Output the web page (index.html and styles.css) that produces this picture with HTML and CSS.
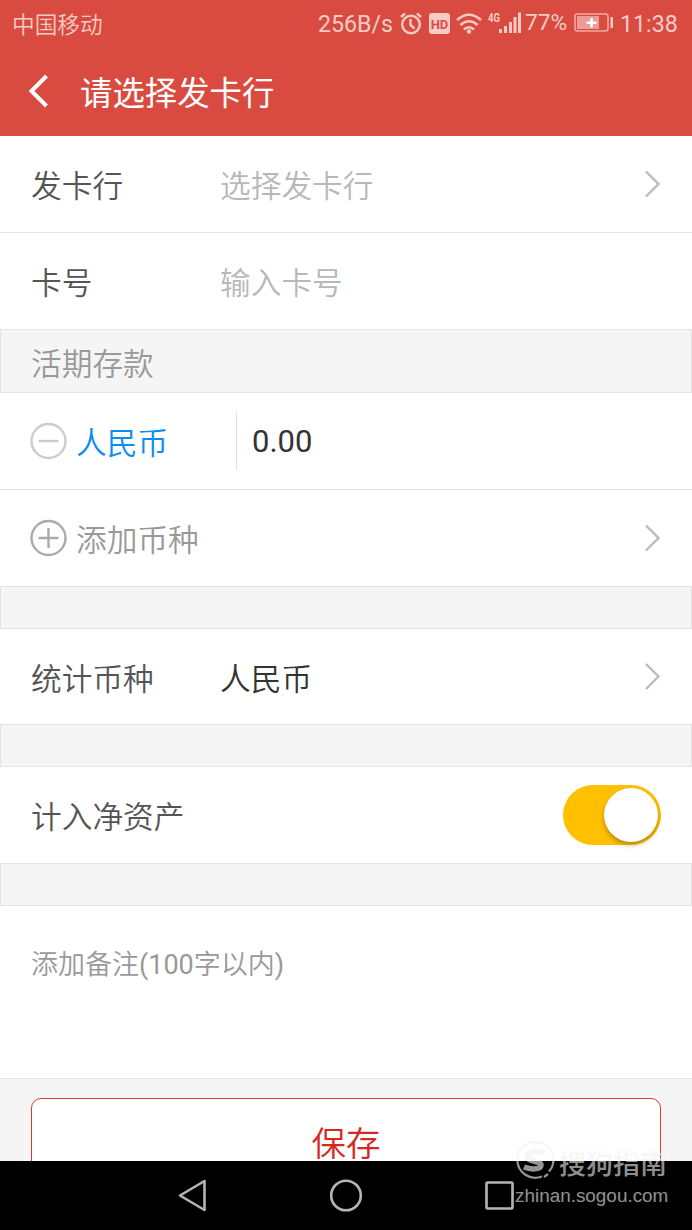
FILE: index.html
```html
<!DOCTYPE html>
<html lang="zh-CN">
<head>
    <meta charset="UTF-8">
    <meta name="viewport" content="width=device-width, initial-scale=1.0">
    <title>请选择发卡行</title>
    <link rel="stylesheet" href="styles.css">
</head>
<body>
    <div class="screen">
        <header class="header">
            <div class="status">
                <span class="carrier">中国移动</span>
                <span class="speed">256B/s</span>
                <svg class="status-icons" width="124" height="30" viewBox="0 0 124 30">
                    <!-- alarm -->
                    <g fill="none" stroke="#f6cbc5" stroke-width="2.400">
                        <circle cx="13" cy="15.500" r="8.800"/>
                        <path d="M12.500 10v6l4 3.500M3 8L7 4.500M19 4.500L23 8"/>
                    </g>
                    <!-- hd -->
                    <rect x="31" y="4" width="21" height="21" rx="3" fill="#f6cbc5"/>
                    <text class="hd" x="41.500" y="19.500" text-anchor="middle">HD</text>
                    <!-- wifi -->
                    <g fill="none" stroke="#f6cbc5" stroke-width="2.600">
                        <path d="M59 11Q71 0.500 83 11M62.500 16Q71 8.500 79.500 16M66 20.500Q71 16 76 20.500"/>
                    </g>
                    <circle cx="71" cy="22.500" r="2.200" fill="#f6cbc5"/>
                    <!-- signal -->
                    <text class="net" x="90" y="13" textLength="12" lengthAdjust="spacingAndGlyphs">4G</text>
                    <path fill="#f6cbc5" d="M101 20h3v4h-3zM106 17h3v7h-3zM111 13h3v11h-3zM115.500 8h3v16h-3zM120 3.500h3v20.500h-3z"/>
                </svg>
                <span class="percent">77%</span>
                <svg class="battery" width="40" height="20" viewBox="0 0 40 20">
                    <rect x="1" y="1" width="33" height="17" rx="2.500" fill="none" stroke="#f0a9a1" stroke-width="1.600"/>
                    <rect x="3" y="3" width="22" height="13" fill="#eb9d95"/>
                    <path d="M17.500 5v9.500M12.500 9.800h10" stroke="#fff" stroke-width="2.600"/>
                    <rect x="36.500" y="4" width="2.500" height="11" fill="#f6cbc5"/>
                </svg>
                <span class="time">11:38</span>
            </div>
            <div class="titlebar">
                <svg class="back" width="20" height="34" viewBox="0 0 20 34"><path d="M18.500 2L3.500 17L18.500 32" fill="none" stroke="#fff" stroke-width="4"/></svg>
                <h1>请选择发卡行</h1>
            </div>
        </header>

        <main class="form">
            <div class="row line">
                <span class="label">发卡行</span>
                <span class="value placeholder">选择发卡行</span>
                <svg class="arrow" width="17" height="28" viewBox="0 0 17 28"><path d="M2 1.500L14.500 14L2 26.500"/></svg>
            </div>
            <div class="row">
                <span class="label">卡号</span>
                <span class="value placeholder">输入卡号</span>
            </div>
            <div class="band band-title">活期存款</div>
            <div class="row line">
                <svg class="circle minus" width="38" height="38" viewBox="0 0 38 38"><circle cx="18.500" cy="19" r="17"/><path d="M8.500 19h20"/></svg>
                <span class="currency">人民币</span>
                <span class="amount">0.00</span>
            </div>
            <div class="row">
                <svg class="circle plus" width="38" height="38" viewBox="0 0 38 38"><circle cx="18.500" cy="19" r="17"/><path d="M8.500 19h20M18.500 9v20"/></svg>
                <span class="add">添加币种</span>
                <svg class="arrow" width="17" height="28" viewBox="0 0 17 28"><path d="M2 1.500L14.500 14L2 26.500"/></svg>
            </div>
            <div class="band"></div>
            <div class="row short">
                <span class="label">统计币种</span>
                <span class="value">人民币</span>
                <svg class="arrow" width="17" height="28" viewBox="0 0 17 28"><path d="M2 1L14.500 13.500L2 26"/></svg>
            </div>
            <div class="band"></div>
            <div class="row">
                <span class="label">计入净资产</span>
                <span class="toggle"><span class="knob"></span></span>
            </div>
            <div class="band"></div>
            <div class="note">添加备注<span class="limit">(100</span>字以内<span class="limit">)</span></div>
            <div class="footer">
                <div class="save">保存</div>
            </div>
        </main>

        <nav class="navbar">
            <svg width="30" height="34" viewBox="0 0 30 34"><path d="M2 16.500L26.500 2V31Z"/></svg>
            <svg width="34" height="34" viewBox="0 0 34 34"><circle cx="16" cy="16.500" r="14.800"/></svg>
            <svg width="30" height="34" viewBox="0 0 30 34"><rect x="1.500" y="3.500" width="26" height="26" rx="1"/></svg>
        </nav>

        <div class="watermark">
            <div class="brand">
                <svg width="40" height="40" viewBox="0 0 40 40">
                    <path d="M27 35.500A18 18 0 1 1 34 30.500M29 36l4-3" fill="none" stroke="currentColor" stroke-width="2.200"/>
                    <path d="M29 12.500C22 9.500 12 10.500 12 15.500C12 21 26.500 19.500 26 24.500C25.500 29 15 28.500 9 26" fill="none" stroke="currentColor" stroke-width="5.500"/>
                </svg>
                <span>搜狗指南</span>
            </div>
            <div class="site">zhinan.sogou.com</div>
        </div>
    </div>
</body>
</html>
```
FILE: styles.css
```css
* { box-sizing: border-box; }
body { margin: 0; background: #fff; font-family: Roboto, "Noto Sans CJK SC", sans-serif; font-weight: 350; }
svg { display: block; flex: none; }
.screen { position: relative; width: 692px; height: 1230px; overflow: hidden; display: flex; flex-direction: column; }

.header { height: 136px; flex: none; background: #d94b41; color: #fff; }
.status { display: flex; align-items: center; height: 48px; padding-left: 12px; color: #f6cbc5; font-size: 23.2px; font-weight: 400; white-space: nowrap; }
.carrier { width: 306px; margin-top: -1px; font-size: 22.7px; font-weight: 350; }
.speed { width: 80px; }
.hd { font: bold 13px Roboto, sans-serif; fill: #d94b41; }
.net { font: bold 12px Roboto, sans-serif; fill: #f6cbc5; }
.percent { width: 49px; padding-left: 3px; font-size: 22.8px; margin-top: -3px; }
.battery { margin: -3px 6px 0 3px; }
.time { font-size: 23.2px; }
.titlebar { display: flex; align-items: center; height: 88px; padding: 0 0 2px 28px; }
.titlebar h1 { margin: 5px 0 0 32px; font-size: 32.4px; font-weight: 400; line-height: 48px; }

.form { flex: 1; min-height: 0; overflow: hidden; font-size: 30.7px; line-height: 46px; color: #333; }
.row { display: flex; align-items: center; height: 96px; padding: 0 31px 0 30px; }
.row.line { height: 97px; border-bottom: 1px solid #e5e5e5; }
.row.short { height: 95px; }
.label, .value, .currency, .add { padding-top: 6px; }
.label { width: 190px; padding-left: 1px; color: #555; }
.placeholder { color: #b8b8b8; }
.arrow { margin-left: auto; fill: none; stroke: #bbb; stroke-width: 2.4; }
.band { height: 43px; background: #f5f5f5; border: 1px solid #e3e3e3; }
.band-title { height: 64px; padding: 12px 30px; color: #999; }
.circle { margin-right: 8px; fill: none; stroke-width: 2.4; }
.minus { stroke: #ccc; }
.plus { stroke: #aaa; }
.currency { width: 160px; color: #0c8df5; }
.amount { height: 58px; padding-left: 15px; border-left: 1px solid #e0e0e0; font-size: 31px; font-weight: 400; line-height: 60px; }
.add { color: #999; }
.toggle { display: flex; justify-content: flex-end; width: 98px; height: 60px; margin-left: auto; padding: 3px; border-radius: 30px; background: #ffc000; }
.knob { width: 54px; height: 54px; border-radius: 50%; background: #fff; box-shadow: 0 3px 5px rgba(0, 0, 0, 0.28); }
.note { height: 172px; padding: 36px 31px; font-size: 27px; color: #999; }
.limit { font-weight: 400; }
.footer { height: 120px; padding: 19px 31px; background: #f5f5f5; border-top: 1px solid #e5e5e5; }
.save { height: 90px; border: 1.5px solid #d43c35; border-radius: 10px; background: #fff; color: #d6281f; font-size: 34.5px; line-height: 90px; text-align: center; }

.navbar { display: flex; align-items: center; flex: none; height: 69px; padding-left: 178px; gap: 121.5px; background: #000; }
.navbar svg { fill: none; stroke: #b5b5b5; stroke-width: 2.6; stroke-linejoin: round; }

/* overlaid on the footer and navigation bar */
.watermark { position: absolute; left: 515px; top: 1140px; color: rgba(240, 240, 240, 0.62); white-space: nowrap; }
.brand { display: flex; align-items: center; height: 41px; gap: 4px; font-size: 27px; font-weight: 500; }
.brand span { padding-top: 4px; }
.site { padding-top: 1px; font-family: "Liberation Sans", Arial, sans-serif; font-size: 18.9px; font-weight: 400; line-height: 28px; }
```
